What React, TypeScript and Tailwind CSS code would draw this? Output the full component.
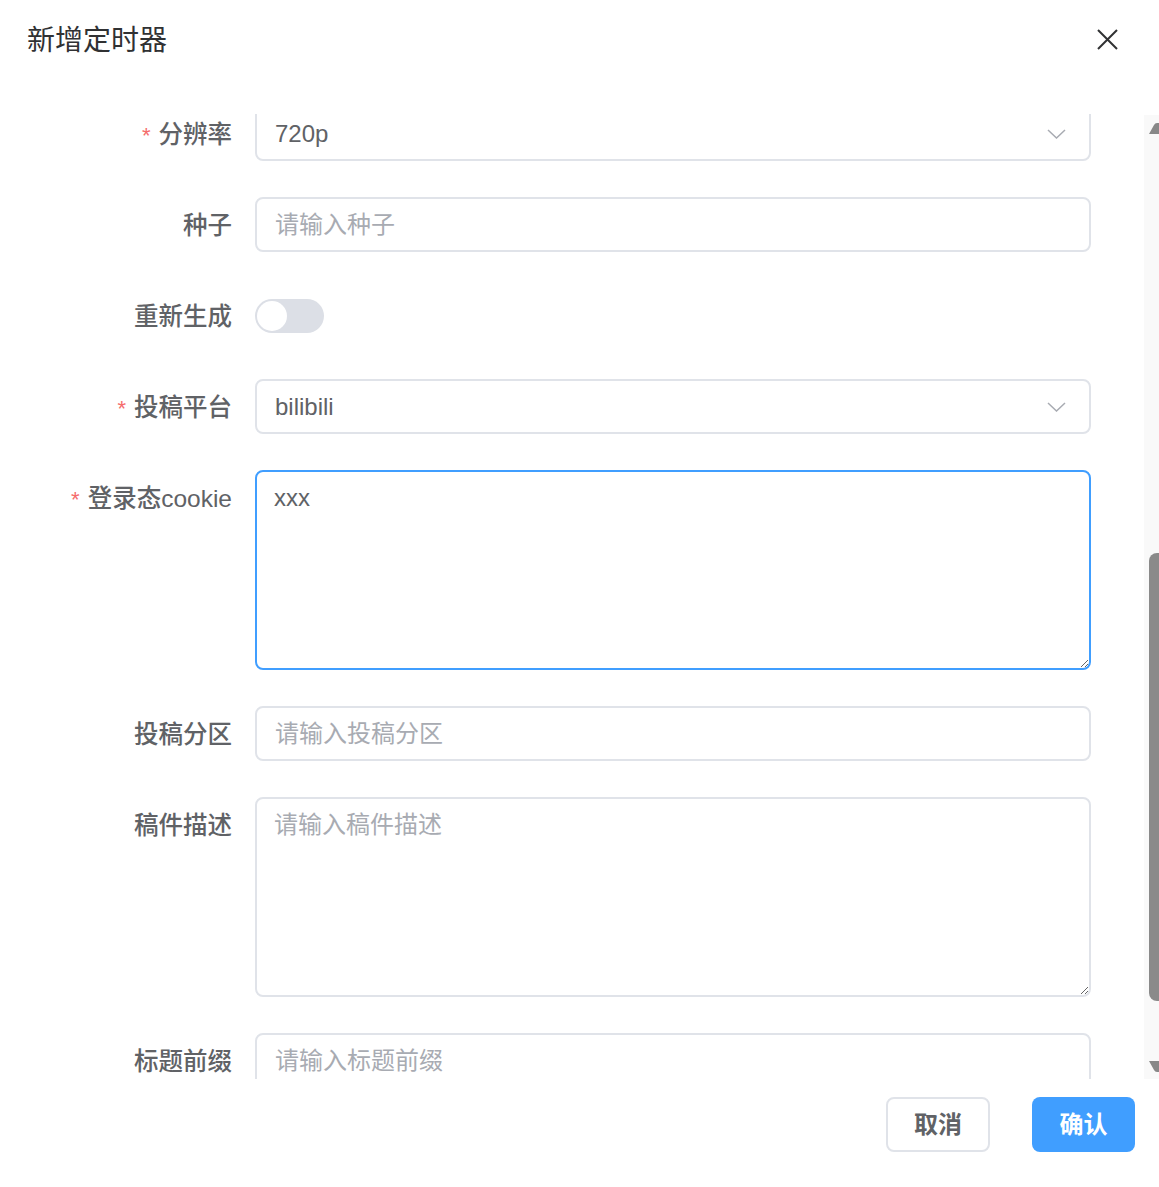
import { type ReactNode } from 'react'

const FONT = "font-['Liberation_Sans','Noto_Sans_CJK_SC',sans-serif]"

function Label({ text, required }: { text: string; required?: boolean }) {
  return (
    <div className="w-[255px] shrink-0 h-[55px] pt-[3px] flex items-center justify-end pr-[23px] text-[24.5px] font-medium text-[#606266]">
      {required && <span className="text-[#f56c6c] mr-[8px] text-[22px] font-normal">*</span>}
      <span>{text}</span>
    </div>
  )
}

function Row({ label, required, children }: { label: string; required?: boolean; children: ReactNode }) {
  return (
    <div className="flex items-start mb-[36px]">
      <Label text={label} required={required} />
      <div className="w-[836px]">{children}</div>
    </div>
  )
}

function Chevron() {
  return (
    <svg width="19" height="10" viewBox="0 0 19 10" fill="none">
      <path d="M1 1l8.5 8L18 1" stroke="#a8abb2" strokeWidth="1.5" />
    </svg>
  )
}

function Select({ value }: { value: string }) {
  return (
    <div className="h-[55px] flex items-center justify-between pl-[18px] pr-[23px] border-2 border-[#e0e3e9] rounded-[8px] text-[24px] text-[#606266]">
      <span>{value}</span>
      <Chevron />
    </div>
  )
}

function TextInput({ placeholder }: { placeholder: string }) {
  return (
    <input
      readOnly
      placeholder={placeholder}
      className="w-full h-[55px] px-[18px] border-2 border-[#e0e3e9] rounded-[8px] text-[24px] text-[#606266] placeholder:text-[#a8abb2] outline-none"
    />
  )
}

function TextArea({ placeholder, value, focused }: { placeholder?: string; value?: string; focused?: boolean }) {
  return (
    <textarea
      readOnly
      defaultValue={value}
      placeholder={placeholder}
      className={
        focused
          ? 'block w-full h-[200px] px-[17px] pt-[8px] leading-[36px] border-2 border-[#409eff] rounded-[8px] text-[24px] text-[#606266] placeholder:text-[#a8abb2] outline-none'
          : 'block w-full h-[200px] px-[17px] pt-[8px] leading-[36px] border-2 border-[#e0e3e9] rounded-[8px] text-[24px] text-[#606266] placeholder:text-[#a8abb2] outline-none'
      }
    />
  )
}

function Scrollbar() {
  return (
    <div className="w-[15px] shrink-0 mt-[1px] bg-[#f9f9f9] relative overflow-hidden">
      <svg className="absolute left-[5px] top-[8px]" width="20" height="12" viewBox="0 0 20 12">
        <path d="M0 11 L5 2 Q6 0 8 0 L12 0 L20 11 Z" fill="#888" />
      </svg>
      <div className="absolute left-[5px] top-[438px] w-[20px] h-[448px] rounded-[8px] bg-[#8a8a8a]" />
      <svg className="absolute left-[5px] top-[945px]" width="20" height="12" viewBox="0 0 20 12">
        <path d="M0 1 L5 10 Q6 12 8 12 L12 12 L20 1 Z" fill="#888" />
      </svg>
    </div>
  )
}

export default function App() {
  return (
    <div className={`w-[1159px] h-[1187px] bg-white flex flex-col overflow-hidden ${FONT}`}>
      {/* Header */}
      <div className="h-[114px] shrink-0 flex items-start justify-between pl-[27px] pr-[41px]">
        <div className="mt-[21px] leading-[40px] text-[28px] text-[#303133]">新增定时器</div>
        <svg className="mt-[29px]" width="21" height="21" viewBox="0 0 21 21" fill="none">
          <path d="M1 1l19 19M20 1L1 20" stroke="#303133" strokeWidth="2" />
        </svg>
      </div>

      {/* Scrollable body */}
      <div className="h-[965px] shrink-0 flex">
        <div className="flex-1 overflow-hidden">
          <div className="-mt-[8px]">
            <Row label="分辨率" required>
              <Select value="720p" />
            </Row>
            <Row label="种子">
              <TextInput placeholder="请输入种子" />
            </Row>
            <Row label="重新生成">
              <div className="h-[55px] flex items-center">
                <div className="w-[69px] h-[34px] rounded-full bg-[#dcdfe6] p-[2px] flex items-center">
                  <div className="w-[30px] h-[30px] rounded-full bg-white" />
                </div>
              </div>
            </Row>
            <Row label="投稿平台" required>
              <Select value="bilibili" />
            </Row>
            <Row label="登录态cookie" required>
              <TextArea value="xxx" focused />
            </Row>
            <Row label="投稿分区">
              <TextInput placeholder="请输入投稿分区" />
            </Row>
            <Row label="稿件描述">
              <TextArea placeholder="请输入稿件描述" />
            </Row>
            <Row label="标题前缀">
              <TextInput placeholder="请输入标题前缀" />
            </Row>
          </div>
        </div>
        <Scrollbar />
      </div>

      {/* Footer */}
      <div className="flex justify-end items-start pt-[18px] pr-[24px] gap-[42px]">
        <button className="w-[104px] h-[55px] border-2 border-[#e0e3e9] rounded-[8px] bg-white text-[24px] font-bold text-[#606266]">
          取消
        </button>
        <button className="w-[103px] h-[55px] rounded-[8px] bg-[#409eff] text-[24px] font-bold text-white">
          确认
        </button>
      </div>
    </div>
  )
}
